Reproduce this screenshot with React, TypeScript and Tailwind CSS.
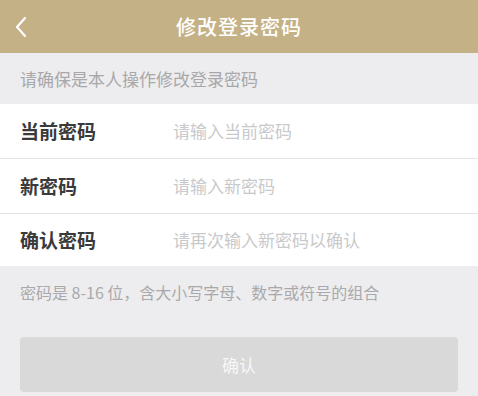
import { useState } from "react";

const fontStack = { fontFamily: '"Noto Sans CJK SC", "Noto Sans", sans-serif' };

const fields = [
  { key: "current", label: "当前密码", placeholder: "请输入当前密码" },
  { key: "next", label: "新密码", placeholder: "请输入新密码" },
  { key: "confirm", label: "确认密码", placeholder: "请再次输入新密码以确认" },
];

export default function App() {
  const [form, setForm] = useState<Record<string, string>>({
    current: "",
    next: "",
    confirm: "",
  });

  return (
    <main
      className="min-h-screen w-full overflow-hidden bg-[#ededef]"
      style={fontStack}
    >
      <header className="relative flex h-[53px] items-center justify-center bg-[#c5b186]">
        <button className="absolute left-[9px] top-[15px] flex h-6 w-6 items-center justify-center">
          <svg width="14" height="22" viewBox="0 0 14 22" fill="none">
            <path
              d="M11 2 L3 11 L11 20"
              stroke="#ffffff"
              strokeWidth="2.2"
              strokeLinecap="round"
              strokeLinejoin="round"
            />
          </svg>
        </button>
        <h1 className="text-[20px] font-medium tracking-[1px] text-white">
          修改登录密码
        </h1>
      </header>

      <p className="flex h-[51px] items-center px-5 text-[17px] text-[#a8a8aa]">
        请确保是本人操作修改登录密码
      </p>

      <section className="bg-white">
        {fields.map((field, i) => (
          <label
            key={field.key}
            className={
              i < fields.length - 1
                ? "flex h-[55px] items-center border-b border-[#e3e3e5] px-5"
                : "flex h-[52px] items-center px-5"
            }
          >
            <span className="w-[153px] shrink-0 text-[19px] font-semibold text-[#3a3a3a]">
              {field.label}
            </span>
            <input
              type="password"
              value={form[field.key]}
              onChange={(e) => setForm({ ...form, [field.key]: e.target.value })}
              placeholder={field.placeholder}
              className="min-w-0 flex-1 bg-transparent text-[17px] text-[#333] outline-none placeholder:text-[#c9c9cb]"
            />
          </label>
        ))}
      </section>

      <p className="flex h-[52px] items-center px-5 text-[16px] text-[#a9a9ab]">
        密码是 8-16 位，含大小写字母、数字或符号的组合
      </p>

      <div className="mt-[19px] px-5">
        <button
          disabled
          className="flex h-[55px] w-full items-center justify-center rounded-[4px] bg-[#d9d9d9] text-[17px] text-[#f7f7f7]"
        >
          确认
        </button>
      </div>
    </main>
  );
}
